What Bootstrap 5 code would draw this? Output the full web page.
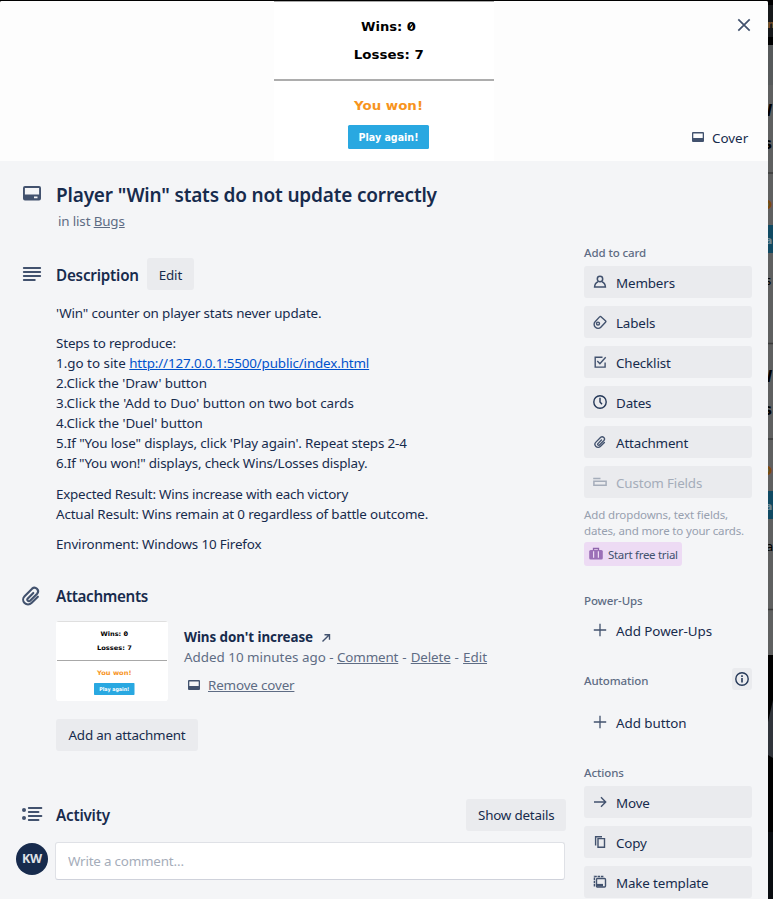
<!DOCTYPE html>
<html lang="en">
<head>
<meta charset="utf-8">
<meta name="viewport" content="width=device-width, initial-scale=1">
<title>Player "Win" stats do not update correctly</title>
<link href="https://cdn.jsdelivr.net/npm/bootstrap@5.3.0/dist/css/bootstrap.min.css" rel="stylesheet">
<style>
  body { font: 13.4px/20px "Noto Sans", "Open Sans", sans-serif; letter-spacing: -.15px; color: #172b4d; background: #000; height: 899px; overflow: hidden; }
  a { color: inherit; }
  p { margin-bottom: 10.4px; }
  .dialog-pane { width: 768px; height: 898px; margin-top: 1px; background: #f4f5f7; overflow: hidden; border-radius: 2px 2px 0 0; }
  .backdrop-strip { width: 5px; height: 899px; overflow: hidden; }
  .cover-area { height: 160px; background: #fdfdfd; }
  .cover-close { width: 40px; height: 40px; top: 4px; right: 4px; }
  .cover-btn { right: 0; bottom: 7px; width: 78px; height: 32px; gap: 6px; }
  .main-col { width: 566px; }
  .side-col { width: 168px; margin-left: 18px; }
  .gutter { width: 56px; padding-left: 22px; flex: none; color: #42526e; }
  .card-title-text { font-size: 19px; line-height: 24px; font-weight: 600; letter-spacing: -.18px; margin: 0; }
  .section-title { font-size: 15.2px; line-height: 20px; font-weight: 600; letter-spacing: -.2px; margin: 0; }
  .attachments-title { letter-spacing: -.33px; }
  .even { letter-spacing: 0; }
  .muted { color: #5e6c84; }
  .btn-soft { --bs-btn-font-size: 13.4px; --bs-btn-line-height: 20px; --bs-btn-padding-x: 12px; --bs-btn-padding-y: 6px; --bs-btn-border-width: 0; --bs-btn-border-radius: 3px; --bs-btn-bg: #eaebee; --bs-btn-color: #172b4d; --bs-btn-hover-bg: #dfe1e6; letter-spacing: -.2px; white-space: nowrap; height: 32px; }
  .side-btn { display: flex; align-items: center; width: 168px; padding: 2px 8px 0; margin-bottom: 8px; text-align: left; letter-spacing: -.15px; }
  .side-btn svg { margin: -3px 8px 0 0; color: #42526e; flex: none; }
  .side-btn.plain { background: transparent; letter-spacing: -.05px; }
  .side-btn.faded { color: #a5adba; }
  .side-btn.faded svg { color: #a5adba; }
  .side-head { font-size: 11.5px; line-height: 16px; font-weight: 500; color: #5e6c84; letter-spacing: -.1px; margin: 0; }
  .side-help { font-size: 11.5px; line-height: 16px; color: #97a0af; letter-spacing: -.12px; white-space: nowrap; }
  .trial { display: flex; align-items: center; gap: 5px; width: 98px; height: 24px; padding-left: 5px; border-radius: 3px; background: #eddbf4; color: #42526e; font-size: 11.5px; letter-spacing: -.3px; white-space: nowrap; }
  .info-btn { width: 20px; height: 22px; border-radius: 3px; background: #eaebee; }
  .thumb { width: 112px; height: 80px; border-radius: 3px; background: #fff; overflow: hidden; flex: none; }
  .thumb svg { display: block; margin: auto; }
  .avatar { width: 32px; height: 32px; margin: 1px 7px 0 16px; background: #172b4d; color: #dfe1e6; font-weight: 700; font-size: 12.5px; letter-spacing: -.3px; }
  .comment-box { width: 510px; height: 38px; padding: 9px 12px; font-size: 13.4px; line-height: 20px; letter-spacing: -.2px; border: 1px solid #dfe1e6; border-bottom-color: #cfd2db; border-radius: 3px; background: #fff; }
  .comment-box::placeholder { color: #a5adba; }
</style>
</head>
<body>
<svg width="0" height="0" class="position-absolute" aria-hidden="true">
  <symbol id="game" viewBox="0 0 220 160">
    <rect width="220" height="160" fill="#fff"/>
    <path d="M0 .5h220" stroke="#a9a9a9"/>
    <path d="M0 79h220" stroke="#929292" stroke-width="1.6"/>
    <g font-family="'DejaVu Sans', sans-serif" font-weight="700" text-anchor="middle" letter-spacing="0">
      <text x="114.5" y="29.8" font-size="12.5" textLength="55" lengthAdjust="spacingAndGlyphs">Wins: 0</text>
      <path d="M134.6 28.300l5-6.200" stroke="#000" stroke-width="1.300"/>
      <text x="114.8" y="57.800" font-size="12.5" textLength="70" lengthAdjust="spacingAndGlyphs">Losses: 7</text>
      <text x="114.500" y="108.800" font-size="12.5" fill="#f7941d" textLength="69" lengthAdjust="spacingAndGlyphs">You won!</text>
      <rect x="74" y="124" width="81" height="24" rx="1.500" fill="#29a8e1"/>
      <text x="114.500" y="140" font-size="10.500" fill="#fff" textLength="60" lengthAdjust="spacingAndGlyphs">Play again!</text>
    </g>
  </symbol>
  <symbol id="cover" viewBox="0 0 16 16"><path fill="currentColor" fill-rule="evenodd" d="M3 3h10a1 1 0 0 1 1 1v8a1 1 0 0 1-1 1H3a1 1 0 0 1-1-1V4a1 1 0 0 1 1-1zm.300 1.500V9h9.400V4.500z"/></symbol>
  <symbol id="clip" viewBox="0 0 24 24"><path fill="none" stroke="currentColor" stroke-width="2.300" stroke-linecap="round" stroke-linejoin="round" d="M14.500 7.500l-6 6.100a1.700 1.700 0 0 0 2.500 2.400l7.700-7.700a3.900 3.900 0 0 0-5.500-5.500L5 11a5.300 5.300 0 0 0 7.500 7.500l7-7" transform="translate(0 1.200)"/></symbol>
  <symbol id="plus" viewBox="0 0 16 16"><path fill="none" stroke="currentColor" stroke-width="1.300" d="M8 1.800v12.400M1.800 8h12.400"/></symbol>
</svg>

<div class="d-flex align-items-start">
  <main class="dialog-pane flex-shrink-0">
    <div class="cover-area position-relative d-flex">
      <svg width="220" height="160" style="margin-left:274px"><use href="#game"/></svg>
      <div class="cover-close position-absolute d-flex align-items-center justify-content-center">
        <svg width="14" height="14" viewBox="0 0 14 14" stroke="#42526e" stroke-width="1.700"><path d="M1.300 1.300l11.400 11.400M12.700 1.300L1.300 12.700"/></svg>
      </div>
      <div class="cover-btn position-absolute d-flex align-items-center">
        <svg width="16" height="16" color="#42526e" style="margin-top:-2px"><use href="#cover"/></svg><span class="even">Cover</span>
      </div>
    </div>

    <header class="d-flex" style="padding-top:22px">
      <div class="gutter"><svg width="20" height="20" viewBox="0 0 20 20" style="display:block"><path fill="currentColor" fill-rule="evenodd" d="M3 3h14a2 2 0 0 1 2 2v10.500a2 2 0 0 1-2 2H3a2 2 0 0 1-2-2V5a2 2 0 0 1 2-2zM2.900 5v6.500h14.200V5zM12 13.500v1.700h3.500v-1.700z"/></svg></div>
      <div>
        <h1 class="card-title-text">Player "Win" stats do not update correctly</h1>
        <div class="muted" style="padding:4px 0 0 2px">in list <a href="#">Bugs</a></div>
      </div>
    </header>

    <div class="d-flex">
      <div class="main-col flex-shrink-0" style="padding-top:27px">
        <section>
          <div class="d-flex align-items-center">
            <div class="gutter"><svg width="20" height="20" viewBox="0 0 20 20" fill="none" stroke="currentColor" stroke-width="1.900" stroke-linecap="round" style="display:block"><path d="M1.800 4h16.400M1.800 8h16.400M1.800 12h16.400M1.800 16h11"/></svg></div>
            <h2 class="section-title" style="padding-top:2px">Description</h2>
            <button class="btn btn-soft ms-2" style="width:47px;padding-top:7px">Edit</button>
          </div>
          <div style="padding:13px 0 0 56px">
            <p>'Win" counter on player stats never update.</p>
            <p>Steps to reproduce:<br><span class="even">1.go to site </span><a href="#" style="color:#0052cc">http://127.0.0.1:5500/public/index.html</a><br><span style="letter-spacing:-.08px">2.Click the 'Draw' button</span><br><span class="even">3.Click the 'Add to Duo' button on two bot cards</span><br><span style="letter-spacing:-.06px">4.Click the 'Duel' button</span><br>5.If "You lose" displays, click 'Play again'. Repeat steps 2-4<br><span style="letter-spacing:-.18px">6.If "You won!" displays, check Wins/Losses display.</span></p>
            <p><span style="letter-spacing:-.22px">Expected Result: Wins increase with each victory</span><br><span style="letter-spacing:-.17px">Actual Result: Wins remain at 0 regardless of battle outcome.</span></p>
            <p>Environment: Windows 10 Firefox</p>
          </div>
        </section>

        <section style="padding-top:20px">
          <div class="d-flex align-items-center">
            <div class="gutter"><svg width="22" height="22" style="display:block;margin-left:-2px;margin-bottom:0"><use href="#clip"/></svg></div>
            <h2 class="section-title attachments-title">Attachments</h2>
          </div>
          <div class="d-flex" style="padding:14px 0 0 56px">
            <div class="thumb"><svg width="110" height="80"><use href="#game"/></svg></div>
            <div class="ms-3" style="padding-top:6px">
              <div class="fw-bold" style="letter-spacing:-.06px">Wins don't increase<svg width="10" height="10" viewBox="0 0 10 10" fill="none" stroke="#42526e" stroke-width="1.400" style="margin-left:8px"><path d="M1.500 8.500L7.800 2.200M3.500 1.700h5v5"/></svg></div>
              <div class="muted even">Added 10 minutes ago - <a href="#" style="letter-spacing:-.15px">Comment</a><span style="letter-spacing:.4px"> - </span><a href="#" style="letter-spacing:-.15px">Delete</a><span style="letter-spacing:.4px"> - </span><a href="#">Edit</a></div>
              <div class="muted d-flex align-items-center mt-2"><svg width="16" height="16" color="#42526e" style="margin:0 6px 0 2px"><use href="#cover"/></svg><a href="#">Remove cover</a></div>
            </div>
          </div>
          <button class="btn btn-soft" style="margin:18px 0 0 56px;width:142px">Add an attachment</button>
        </section>

        <section style="padding-top:48px">
          <div class="d-flex align-items-center">
            <div class="gutter"><svg width="21" height="20" viewBox="0 0 21 20" stroke="currentColor" stroke-width="1.900" stroke-linecap="round" style="display:block;margin-top:-1px"><path d="M6.800 4h12.600M6.800 8h9.700M6.800 12h12.600M6.800 16h9.700"/><g fill="currentColor" stroke="none"><circle cx="2" cy="6" r="2"/><circle cx="2" cy="14" r="2"/></g></svg></div>
            <h2 class="section-title">Activity</h2>
            <button class="btn btn-soft ms-auto" style="width:100px">Show details</button>
          </div>
          <div class="d-flex" style="margin-top:11px">
            <div class="avatar rounded-circle d-flex align-items-center justify-content-center">KW</div>
            <input class="comment-box" placeholder="Write a comment…" aria-label="Comment">
          </div>
        </section>
      </div>

      <aside class="side-col flex-shrink-0" style="padding-top:14px">
        <h3 class="side-head" style="margin-bottom:5px">Add to card</h3>
        <button class="btn btn-soft side-btn"><svg width="16" height="16" viewBox="0 0 16 16" fill="none" stroke="currentColor" stroke-width="1.500"><circle cx="8" cy="5" r="2.700"/><path d="M6 7.800C3.700 8.700 2.700 10.500 2.600 13.100h10.800C13.300 10.500 12.300 8.700 10 7.800"/></svg>Members</button>
        <button class="btn btn-soft side-btn"><svg width="16" height="16" viewBox="0 0 16 16" fill="none" stroke="currentColor" stroke-width="1.400" stroke-linejoin="round"><path d="M8.700 2.500l5 4.500a.6.600 0 0 1 0 .9l-4.900 5.300c-1.600 1.700-4 1.300-5.400 0s-1.900-3.700-.3-5.400l4.700-5.200a.6.600 0 0 1 .9-.1z"/><circle cx="6" cy="9.600" r="1.500"/></svg>Labels</button>
        <button class="btn btn-soft side-btn"><svg width="16" height="16" viewBox="0 0 16 16" fill="none" stroke="currentColor" stroke-width="1.400"><path d="M10.500 3.200H3.200v9.900h9.900V8.500M5.300 7l2.600 2.700 5.800-6.400"/></svg>Checklist</button>
        <button class="btn btn-soft side-btn"><svg width="16" height="16" viewBox="0 0 16 16" fill="none" stroke="#253858" stroke-width="1.400"><circle cx="8" cy="8" r="6.200"/><path d="M8 3.800V8l2 2.300"/></svg>Dates</button>
        <button class="btn btn-soft side-btn"><svg width="16" height="16" viewBox="0 0 16 16"><use href="#clip" x="1" y="1" width="14" height="14"/></svg>Attachment</button>
        <button class="btn btn-soft side-btn faded"><svg width="16" height="16" viewBox="0 0 16 16" fill="none" stroke="currentColor" stroke-width="1.500"><path d="M1.200 4.500h7.300M1.900 7.300h12.200v3.900H1.900z"/></svg>Custom Fields</button>
        <div class="side-help" style="margin-top:9px">Add dropdowns, text fields,<br><span style="letter-spacing:-.17px">dates, and more to your cards.</span></div>
        <div class="trial" style="margin-top:3px"><svg width="14" height="14" viewBox="0 0 14 14"><path fill="none" stroke="#8f64ab" stroke-width="1.300" d="M4.500 3.500v-2h5v2"/><rect x=".2" y="3" width="13.600" height="9.500" rx="1.500" fill="#9c70b7"/><path stroke="#eddbf4" stroke-width="1.200" fill="none" d="M4.600 4.300v6.500M9.400 4.300v6.500"/></svg><span style="padding-top:1px">Start free trial</span></div>

        <h3 class="side-head" style="margin:27px 0 5px">Power-Ups</h3>
        <button class="btn btn-soft side-btn plain"><svg width="16" height="16"><use href="#plus"/></svg>Add Power-Ups</button>
        <div class="d-flex justify-content-between align-items-center" style="margin:22px 0 16px;height:22px"><h3 class="side-head" style="padding-top:3px">Automation</h3>
          <div class="info-btn d-flex align-items-center justify-content-center"><svg width="14" height="14" viewBox="0 0 14 14" fill="none" stroke="#253858" stroke-width="1.400"><circle cx="7" cy="7" r="6.200"/><path d="M7 3.300v1.600M7 6v4.500" stroke-width="1.600"/></svg></div></div>
        <button class="btn btn-soft side-btn plain"><svg width="16" height="16"><use href="#plus"/></svg>Add button</button>
        <h3 class="side-head" style="margin:27px 0 5px">Actions</h3>
        <button class="btn btn-soft side-btn"><svg width="16" height="16" viewBox="0 0 16 16" fill="none" stroke="currentColor" stroke-width="1.400"><path d="M2 8h11.500M9 3.200L13.700 8 9 12.800"/></svg>Move</button>
        <button class="btn btn-soft side-btn"><svg width="16" height="16" viewBox="0 0 16 16" fill="none" stroke="currentColor" stroke-width="1.400"><path d="M3.600 11.500V2.700h6.400M6 4.600h6.500v8.700H6z"/></svg>Copy</button>
        <button class="btn btn-soft side-btn"><svg width="16" height="16" viewBox="0 0 16 16" fill="none" stroke="currentColor" stroke-width="1.400"><path d="M2.400 12.500V2.500h9.600" stroke-dasharray="2.500 .8"/><rect x="4.500" y="4.500" width="9" height="8.500" rx="1"/><path d="M4.500 11.200h6.500" stroke-width="2.600"/></svg>Make template</button>
      </aside>
    </div>
  </main>

  <svg class="backdrop-strip flex-shrink-0" viewBox="0 0 5 899" aria-hidden="true">
    <rect width="5" height="899" fill="#000"/>
    <rect y="5" width="5" height="32" fill="#17191b"/>
    <rect y="45" width="5" height="40" fill="#575a5b"/>
    <rect y="85" width="5" height="570" fill="#5f6060"/>
    <path d="M0 173h5M0 343.500h5M0 439h5M0 609.500h5" stroke="#3b3b3b" stroke-width="1.500"/>
    <rect y="225" width="5" height="28" fill="#104a63"/>
    <rect y="491" width="5" height="28" fill="#104a63"/>
    <g font-family="'DejaVu Sans', sans-serif" font-weight="700" font-size="15">
      <text x="-1" y="28" font-size="11" fill="#7c532c">n</text>
      <text x="-12" y="116">W</text><text x="-5" y="149">s</text>
      <text x="-6" y="209" fill="#7a4a10">o</text>
      <text x="-3" y="244" font-size="11" fill="#6d8791">a</text>
      <text x="-3" y="285" font-size="12" font-weight="400">s</text>
      <text x="-12" y="382">W</text><text x="-5" y="415">s</text>
      <text x="-6" y="475" fill="#7a4a10">o</text>
      <text x="-3" y="510" font-size="11" fill="#6d8791">a</text>
      <text x="-2" y="551" font-size="12" font-weight="400">a</text>
    </g>
    <path d="M5 700L0 722v33l5 3z" fill="#30343a"/>
    <rect y="832" width="5" height="67" fill="#090c10"/>
  </svg>
</div>
<script src="https://cdn.jsdelivr.net/npm/bootstrap@5.3.0/dist/js/bootstrap.bundle.min.js"></script>
</body>
</html>
